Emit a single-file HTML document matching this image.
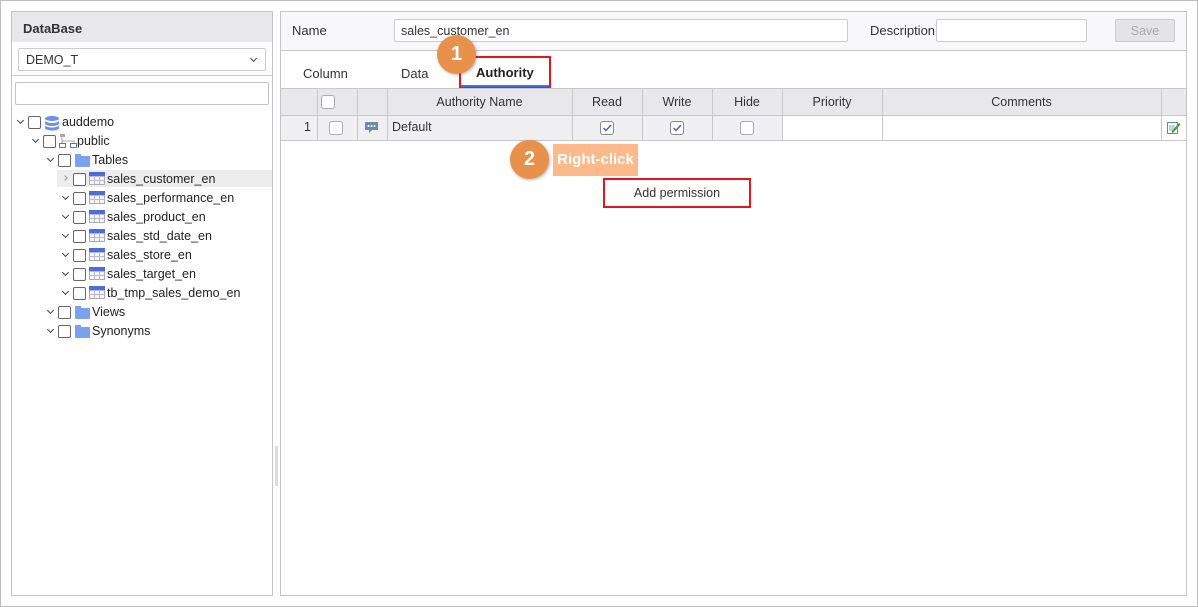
<!DOCTYPE html>
<html><head><meta charset="utf-8"><style>
*{box-sizing:border-box;margin:0;padding:0}
body{width:1198px;height:607px;background:#fff;font-family:"Liberation Sans",sans-serif;font-size:12px;color:#333;position:relative;overflow:hidden}
.abs{position:absolute}
.cb{position:absolute;width:13px;height:13px;border:1px solid #666;border-radius:2px;background:#fff}
.gcb{position:absolute;width:14px;height:14px;border:1px solid #aaa;border-radius:3px;background:#fff}
.tr{position:absolute;height:19px;line-height:19px;font-size:12.5px;color:#222}
.chev{position:absolute;width:5px;height:5px;border-right:1.3px solid #444;border-bottom:1.3px solid #444;transform:rotate(45deg)}
.tbl{position:absolute;width:16px;height:13px;border:1px solid #aab;background:repeating-linear-gradient(90deg,transparent 0 4px,#bbc 4px 5px),repeating-linear-gradient(0deg,#f4f4f8 0 3px,#bbc 3px 4px)}
.tbl:before{content:"";position:absolute;left:-1px;top:-1px;width:16px;height:4px;background:#4a6ee0}
.fold{position:absolute;width:15px;height:11px;background:#7aa0f0;border-radius:1px}
.fold:before{content:"";position:absolute;left:0;top:-2px;width:6px;height:3px;background:#7aa0f0}
.col{position:absolute;top:88px;height:52px;border-left:1px solid #c8c8c8}
.hd{position:absolute;top:88px;height:28px;line-height:28px;text-align:center;font-size:12.5px;color:#333}
.chk{position:absolute;top:121px;width:14px;height:14px;border:1px solid #888;border-radius:3px;background:#fff}
.chk svg{position:absolute;left:1px;top:1px}
</style></head><body>
<div class="abs" style="left:0;top:0;width:1198px;height:607px;border:1px solid #bdbdbd"></div>
<!-- left panel -->
<div class="abs" style="left:11px;top:11px;width:262px;height:585px;border:1px solid #c4c4c4"></div>
<div class="abs" style="left:12px;top:12px;width:260px;height:30px;background:#e8e8ea;font-weight:bold;font-size:13px;line-height:33px;padding-left:11px;color:#333">DataBase</div>
<div class="abs" style="left:12px;top:42px;width:260px;height:34px;background:#fff;border-bottom:1px solid #ccc"></div>
<div class="abs" style="left:18px;top:48px;width:248px;height:23px;border:1px solid #ccc;border-radius:2px;line-height:22px;padding-left:7px;font-size:12.5px;color:#333">DEMO_T</div>
<div class="chev" style="left:251px;top:56px"></div>
<div class="abs" style="left:15px;top:82px;width:254px;height:23px;border:1px solid #c4c4c4;border-radius:2px"></div>
<div class="abs" style="left:57px;top:170px;width:215px;height:17px;background:#ededed"></div>
<!-- tree -->
<div class="chev" style="left:18px;top:118px"></div><div class="cb" style="left:28px;top:116px"></div>
<svg class="abs" style="left:44px;top:115px" width="16" height="16"><ellipse cx="8" cy="3.5" rx="7" ry="2.5" fill="#6f8ff0"/><path d="M1 5.5v3c0 1.4 3.1 2.5 7 2.5s7-1.1 7-2.5v-3c0 1.4-3.1 2.5-7 2.5S1 6.9 1 5.5zM1 10v3c0 1.4 3.1 2.5 7 2.5s7-1.1 7-2.5v-3c0 1.4-3.1 2.5-7 2.5S1 11.4 1 10z" fill="#6f8ff0"/></svg>
<div class="tr" style="left:62px;top:113px">auddemo</div>
<div class="chev" style="left:33px;top:137px"></div><div class="cb" style="left:43px;top:135px"></div>
<svg class="abs" style="left:59px;top:133px" width="18" height="16"><rect x="1" y="1" width="5" height="3" fill="#aaa"/><path d="M3 4v4h12v2M3 8v2" stroke="#aaa" fill="none"/><rect x="0.5" y="10.5" width="6" height="4" fill="none" stroke="#5577dd"/><rect x="11.5" y="10.5" width="6" height="4" fill="none" stroke="#5577dd"/></svg>
<div class="tr" style="left:77px;top:132px">public</div>
<div class="chev" style="left:48px;top:156px"></div><div class="cb" style="left:58px;top:154px"></div>
<div class="fold" style="left:75px;top:156px"></div><div class="tr" style="left:92px;top:151px">Tables</div>
<div class="abs" style="left:63px;top:176px;width:4px;height:4px;border-right:1px solid #999;border-top:1px solid #999;transform:rotate(45deg)"></div>
<div class="cb" style="left:73px;top:173px"></div><div class="tbl" style="left:89px;top:172px"></div><div class="tr" style="left:107px;top:170px">sales_customer_en</div>
<div class="chev" style="left:63px;top:194px"></div><div class="cb" style="left:73px;top:192px"></div><div class="tbl" style="left:89px;top:191px"></div><div class="tr" style="left:107px;top:189px">sales_performance_en</div>
<div class="chev" style="left:63px;top:213px"></div><div class="cb" style="left:73px;top:211px"></div><div class="tbl" style="left:89px;top:210px"></div><div class="tr" style="left:107px;top:208px">sales_product_en</div>
<div class="chev" style="left:63px;top:232px"></div><div class="cb" style="left:73px;top:230px"></div><div class="tbl" style="left:89px;top:229px"></div><div class="tr" style="left:107px;top:227px">sales_std_date_en</div>
<div class="chev" style="left:63px;top:251px"></div><div class="cb" style="left:73px;top:249px"></div><div class="tbl" style="left:89px;top:248px"></div><div class="tr" style="left:107px;top:246px">sales_store_en</div>
<div class="chev" style="left:63px;top:270px"></div><div class="cb" style="left:73px;top:268px"></div><div class="tbl" style="left:89px;top:267px"></div><div class="tr" style="left:107px;top:265px">sales_target_en</div>
<div class="chev" style="left:63px;top:289px"></div><div class="cb" style="left:73px;top:287px"></div><div class="tbl" style="left:89px;top:286px"></div><div class="tr" style="left:107px;top:284px">tb_tmp_sales_demo_en</div>
<div class="chev" style="left:48px;top:308px"></div><div class="cb" style="left:58px;top:306px"></div><div class="fold" style="left:75px;top:308px"></div><div class="tr" style="left:92px;top:303px">Views</div>
<div class="chev" style="left:48px;top:327px"></div><div class="cb" style="left:58px;top:325px"></div><div class="fold" style="left:75px;top:327px"></div><div class="tr" style="left:92px;top:322px">Synonyms</div>
<div class="abs" style="left:275px;top:446px;width:3px;height:40px;background:#ddd"></div>
<!-- right panel -->
<div class="abs" style="left:280px;top:11px;width:907px;height:585px;border:1px solid #c4c4c4"></div>
<div class="abs" style="left:281px;top:12px;width:905px;height:39px;background:#f8f8fa;border-bottom:1px solid #c8c8c8"></div>
<div class="abs" style="left:292px;top:23px;font-size:13px;color:#333">Name</div>
<div class="abs" style="left:394px;top:19px;width:454px;height:23px;border:1px solid #ccc;border-radius:2px;background:#fff;line-height:22px;padding-left:6px;font-size:12.5px">sales_customer_en</div>
<div class="abs" style="left:870px;top:23px;font-size:13px;color:#333">Description</div>
<div class="abs" style="left:936px;top:19px;width:151px;height:23px;border:1px solid #ccc;border-radius:2px;background:#fff"></div>
<div class="abs" style="left:1115px;top:19px;width:60px;height:23px;border:1px solid #ccc;border-radius:2px;background:#e4e4e6;color:#aaa;text-align:center;line-height:22px;font-size:12.5px">Save</div>
<!-- tabs -->
<div class="abs" style="left:303px;top:66px;font-size:13px;color:#333">Column</div>
<div class="abs" style="left:401px;top:66px;font-size:13px;color:#333">Data</div>
<div class="abs" style="left:476px;top:65px;font-size:13px;font-weight:bold;color:#222">Authority</div>
<div class="abs" style="left:460px;top:85px;width:89px;height:2px;background:#4a6ee0"></div>
<div class="abs" style="left:459px;top:56px;width:92px;height:33px;border:2px solid #e8141b"></div>
<!-- grid -->
<div class="abs" style="left:281px;top:88px;width:905px;height:28px;background:#e8e8ec;border-top:1px solid #c8c8c8;border-bottom:1px solid #c8c8c8"></div>
<div class="abs" style="left:281px;top:116px;width:501px;height:24px;background:#f0f0f2"></div>
<div class="abs" style="left:281px;top:140px;width:905px;height:1px;background:#c8c8c8"></div>
<div class="col" style="left:317px"></div><div class="col" style="left:357px"></div><div class="col" style="left:387px"></div><div class="col" style="left:572px"></div><div class="col" style="left:642px"></div><div class="col" style="left:712px"></div><div class="col" style="left:782px"></div><div class="col" style="left:882px"></div><div class="col" style="left:1161px"></div>
<div class="gcb" style="left:321px;top:95px"></div>
<div class="hd" style="left:387px;width:185px">Authority Name</div>
<div class="hd" style="left:572px;width:70px">Read</div>
<div class="hd" style="left:642px;width:70px">Write</div>
<div class="hd" style="left:712px;width:70px">Hide</div>
<div class="hd" style="left:782px;width:100px">Priority</div>
<div class="hd" style="left:882px;width:279px">Comments</div>
<div class="abs" style="left:281px;top:120px;width:30px;text-align:right;font-size:12.5px">1</div>
<div class="gcb" style="left:329px;top:121px"></div>
<svg class="abs" style="left:364px;top:121px" width="15" height="14"><path d="M1 1h13v8H8l-3 3V9H1z" fill="#6f8aa8"/><circle cx="4.5" cy="5" r="1" fill="#fff"/><circle cx="7.5" cy="5" r="1" fill="#fff"/><circle cx="10.5" cy="5" r="1" fill="#fff"/></svg>
<div class="abs" style="left:392px;top:120px;font-size:12.5px">Default</div>
<div class="chk" style="left:600px"><svg width="10" height="10"><path d="M1.5 5l2.5 2.5 5-5.5" stroke="#3b5bd6" stroke-width="1.4" fill="none"/></svg></div>
<div class="chk" style="left:670px"><svg width="10" height="10"><path d="M1.5 5l2.5 2.5 5-5.5" stroke="#3b5bd6" stroke-width="1.4" fill="none"/></svg></div>
<div class="gcb" style="left:740px;top:121px"></div>
<svg class="abs" style="left:1166px;top:120px" width="15" height="15"><rect x="1.5" y="2.5" width="10" height="11" fill="#fff" stroke="#5a8ac0"/><path d="M3 6h6M3 8h6M3 10h5" stroke="#8ab"/><path d="M6 11l7-8 1.5 1.5-7 8-2 .5z" fill="#4a9a3a"/></svg>
<!-- annotations -->
<div class="abs" style="left:437px;top:35px;width:39px;height:39px;border-radius:50%;background:#e8914a;color:#fff;font-weight:bold;font-size:20px;text-align:center;line-height:39px;box-shadow:1px 1px 3px rgba(0,0,0,.3)">1</div>
<div class="abs" style="left:510px;top:140px;width:39px;height:39px;border-radius:50%;background:#e8914a;color:#fff;font-weight:bold;font-size:20px;text-align:center;line-height:39px;box-shadow:1px 1px 3px rgba(0,0,0,.3)">2</div>
<div class="abs" style="left:553px;top:144px;width:85px;height:32px;background:#fdb98a;color:#fff;font-weight:bold;font-size:15px;text-align:center;line-height:32px">Right-click</div>
<div class="abs" style="left:603px;top:178px;width:148px;height:30px;border:2px solid #e8141b;background:#fff;text-align:center;line-height:26px;font-size:12.5px;color:#333">Add permission</div>
</body></html>
